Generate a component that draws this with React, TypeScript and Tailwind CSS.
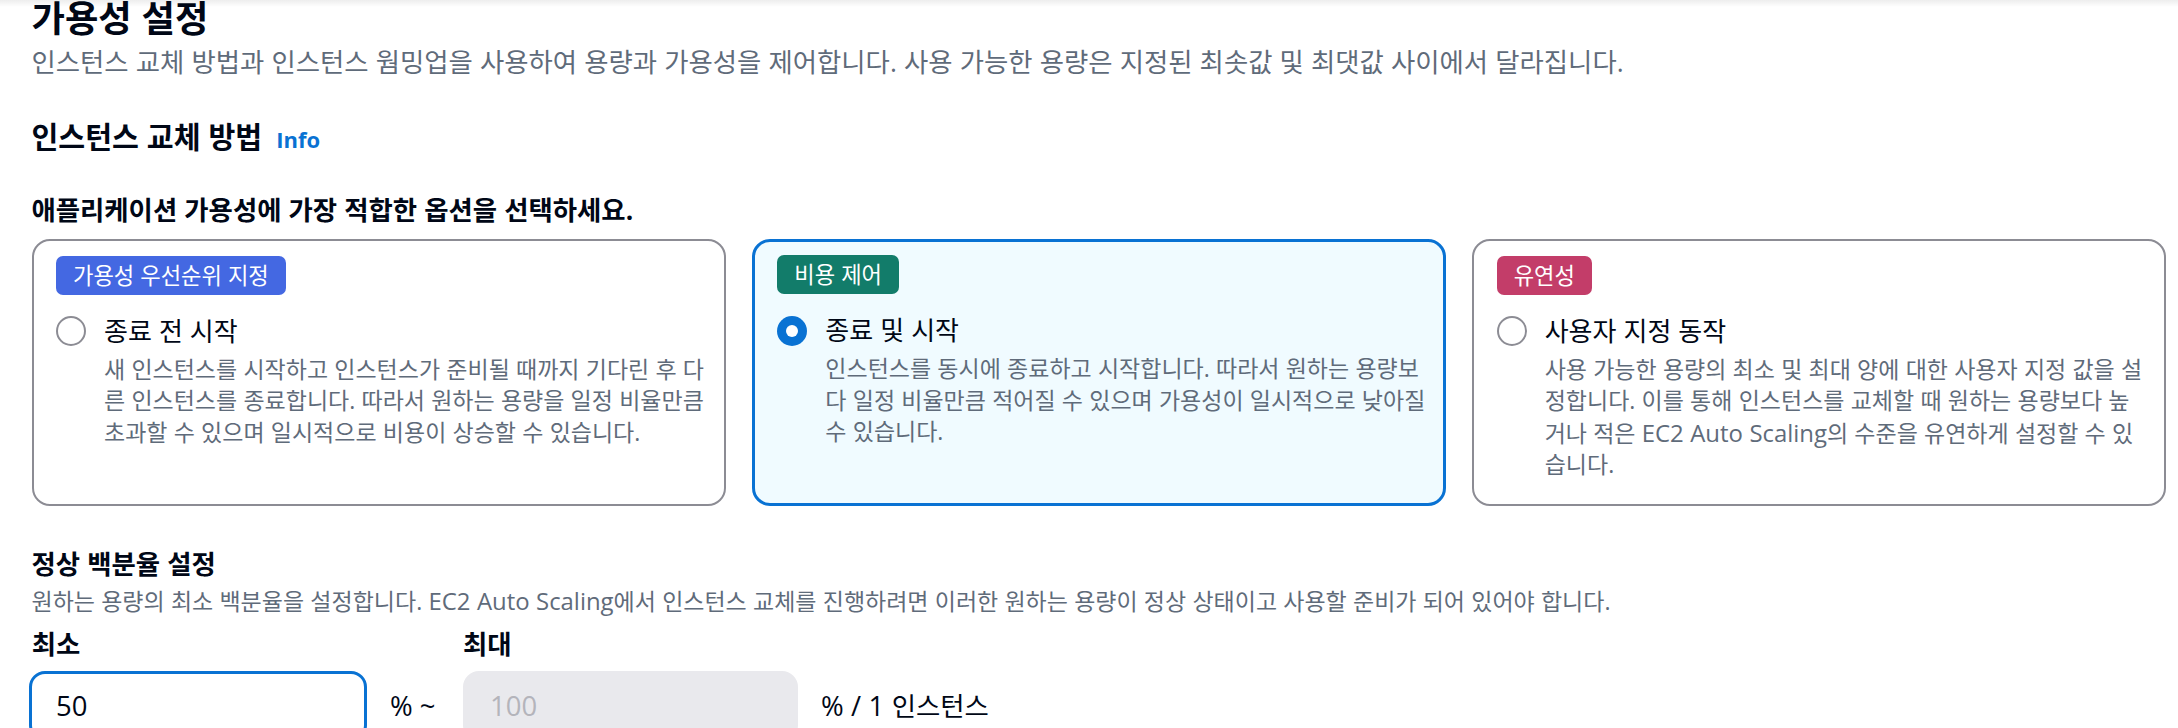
import React from "react";

function L({ children }: { children: React.ReactNode }) {
  return <span className="text-[1.04em]">{children}</span>;
}

type CardProps = {
  badge: string;
  badgeClass: string;
  label: string;
  desc: React.ReactNode;
  selected?: boolean;
};

function Card({ badge, badgeClass, label, desc, selected }: CardProps) {
  return (
    <div
      className={
        selected
          ? "rounded-[18px] border-[3.5px] border-[#0972d3] bg-[#f0fbff] pt-[13.8px] pl-[22.5px] pr-[16px] pb-[21.5px]"
          : "rounded-[18px] border-2 border-[#8c8c94] bg-white pt-[15.3px] pl-[22.5px] pr-[19px] pb-[23px]"
      }
    >
      <div className="flex">
        <span
          className={`flex h-[39px] items-center rounded-[7px] px-[17px] text-[22.2px] leading-[39px] text-white [word-spacing:0.011em] ${badgeClass}`}
        >
          {badge}
        </span>
      </div>
      <div className="mt-[19px] flex">
        <div className="flex h-[35px] w-[48px] shrink-0 items-center">
          {selected ? (
            <span className="flex h-[30px] w-[30px] items-center justify-center rounded-full bg-[#0972d3]">
              <span className="h-[12px] w-[12px] rounded-full bg-white" />
            </span>
          ) : (
            <span className="h-[30px] w-[30px] rounded-full border-2 border-[#8c8c94] bg-white" />
          )}
        </div>
        <div className="text-[26px] leading-[35px] text-[#000716] [word-spacing:0.011em]">
          {label}
        </div>
      </div>
      <div className="mt-[5px] pl-[48px] text-[23px] leading-[31.5px] text-[#5f6b7a] [word-spacing:0.011em]">
        {desc}
      </div>
    </div>
  );
}

export default function App() {
  return (
    <div className="relative h-[728px] overflow-hidden bg-white pl-[31.5px] pr-[11.5px] font-['Open_Sans','Noto_Sans_CJK_KR',sans-serif]">
      <div className="pointer-events-none absolute inset-x-0 top-0 h-[7px] bg-linear-to-b from-[rgba(0,0,0,0.07)] to-transparent" />

      <h1 className="mt-[-3px] text-[36.3px] font-bold leading-[42px] text-[#000716] [word-spacing:0.011em]">
        가용성 설정
      </h1>
      <p className="mt-[6px] text-[26.4px] leading-[35px] text-[#5f6b7a] [word-spacing:0.011em]">
        인스턴스 교체 방법과 인스턴스 웜밍업을 사용하여 용량과 가용성을 제어합니다. 사용 가능한 용량은 지정된 최솟값 및 최댓값 사이에서 달라집니다.
      </p>

      <div className="mt-[37.5px] flex items-baseline gap-[14px] leading-[38px]">
        <h2 className="text-[29.2px] font-bold text-[#000716] [word-spacing:0.011em]">인스턴스 교체 방법</h2>
        <span className="text-[22px] font-bold text-[#0972d3]">Info</span>
      </div>

      <div className="mt-[35.5px] text-[26.4px] font-bold leading-[35px] text-[#000716] [word-spacing:0.011em]">
        애플리케이션 가용성에 가장 적합한 옵션을 선택하세요.
      </div>

      <div className="mt-[10.7px] grid grid-cols-3 gap-[26px]">
        <Card
          badge="가용성 우선순위 지정"
          badgeClass="bg-[#4468e2]"
          label="종료 전 시작"
          desc="새 인스턴스를 시작하고 인스턴스가 준비될 때까지 기다린 후 다른 인스턴스를 종료합니다. 따라서 원하는 용량을 일정 비율만큼 초과할 수 있으며 일시적으로 비용이 상승할 수 있습니다."
        />
        <Card
          selected
          badge="비용 제어"
          badgeClass="bg-[#127c6a]"
          label="종료 및 시작"
          desc="인스턴스를 동시에 종료하고 시작합니다. 따라서 원하는 용량보다 일정 비율만큼 적어질 수 있으며 가용성이 일시적으로 낮아질 수 있습니다."
        />
        <Card
          badge="유연성"
          badgeClass="bg-[#c33d69]"
          label="사용자 지정 동작"
          desc={
            <>
              사용 가능한 용량의 최소 및 최대 양에 대한 사용자 지정 값을 설정합니다. 이를 통해 인스턴스를 교체할 때 원하는 용량보다 높거나 적은 <L>EC2 Auto Scaling</L>의 수준을 유연하게 설정할 수 있습니다.
            </>
          }
        />
      </div>

      <div className="mt-[41px] text-[26.4px] font-bold leading-[35px] text-[#000716] [word-spacing:0.011em]">
        정상 백분율 설정
      </div>
      <p className="mt-[3px] text-[23px] leading-[31.5px] text-[#5f6b7a] [word-spacing:0.011em]">
        원하는 용량의 최소 백분율을 설정합니다. <L>EC2 Auto Scaling</L>에서 인스턴스 교체를 진행하려면 이러한 원하는 용량이 정상 상태이고 사용할 준비가 되어 있어야 합니다.
      </p>

      <div className="ml-[-2.5px] mt-[10px] grid grid-cols-[338px_96px_335px_auto] text-[26.4px] text-[#000716]">
        <div className="pl-[2.7px] font-bold leading-[35px]">최소</div>
        <div />
        <div className="font-bold leading-[35px]">최대</div>
        <div />

        <div className="mt-[8.5px] flex h-[70px] items-center rounded-[16px] border-[3.5px] border-[#0972d3] bg-white pl-[24px]">
          <L>50</L>
        </div>
        <div className="mt-[8.5px] flex items-center pl-[23px]">
          <L>% ~</L>
        </div>
        <div className="mt-[8.5px] flex h-[70px] items-center rounded-[16px] border-[3.5px] border-[#e9e9ed] bg-[#e9e9ed] pl-[24px] text-[#b4b4bb]">
          <L>100</L>
        </div>
        <div className="mt-[8.5px] flex items-center pl-[23px] [word-spacing:0.011em]">
          <span className="whitespace-pre"><L>% / 1 </L>인스턴스</span>
        </div>
      </div>
    </div>
  );
}
